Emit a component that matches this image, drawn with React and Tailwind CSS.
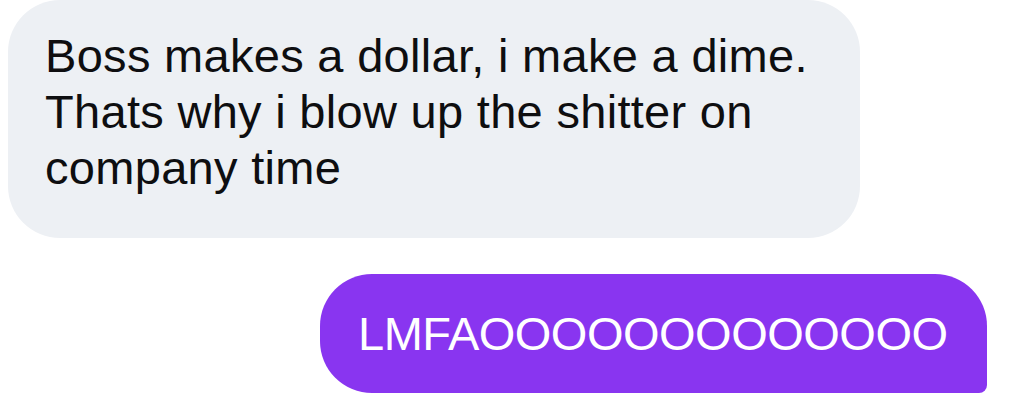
import React from "react";

const App = () => {
  return (
    <div
      className="w-[1010px] h-[399px] bg-white overflow-hidden"
      style={{ fontFamily: '"Liberation Sans", Arial, sans-serif' }}
    >
      <div className="pl-[8px]">
        <div className="w-[852px] bg-[#edf0f4] rounded-[52px] pt-[28px] pb-[42px] pl-[37px] text-[47px] leading-[56px] text-[#0e0e10] tracking-[0.3px] whitespace-nowrap">
          Boss makes a dollar, i make a dime.
          <br />
          Thats why i blow up the shitter on
          <br />
          company time
        </div>
      </div>
      <div className="flex justify-end pr-[23px] mt-[36px]">
        <div className="w-[667px] h-[119px] bg-[#8935f0] rounded-[52px] rounded-br-[8px] pt-[32px] pl-[38px] text-[47px] leading-[56px] text-white tracking-[-0.5px] whitespace-nowrap">
          LMFAOOOOOOOOOOOOO
        </div>
      </div>
    </div>
  );
};

export default App;
